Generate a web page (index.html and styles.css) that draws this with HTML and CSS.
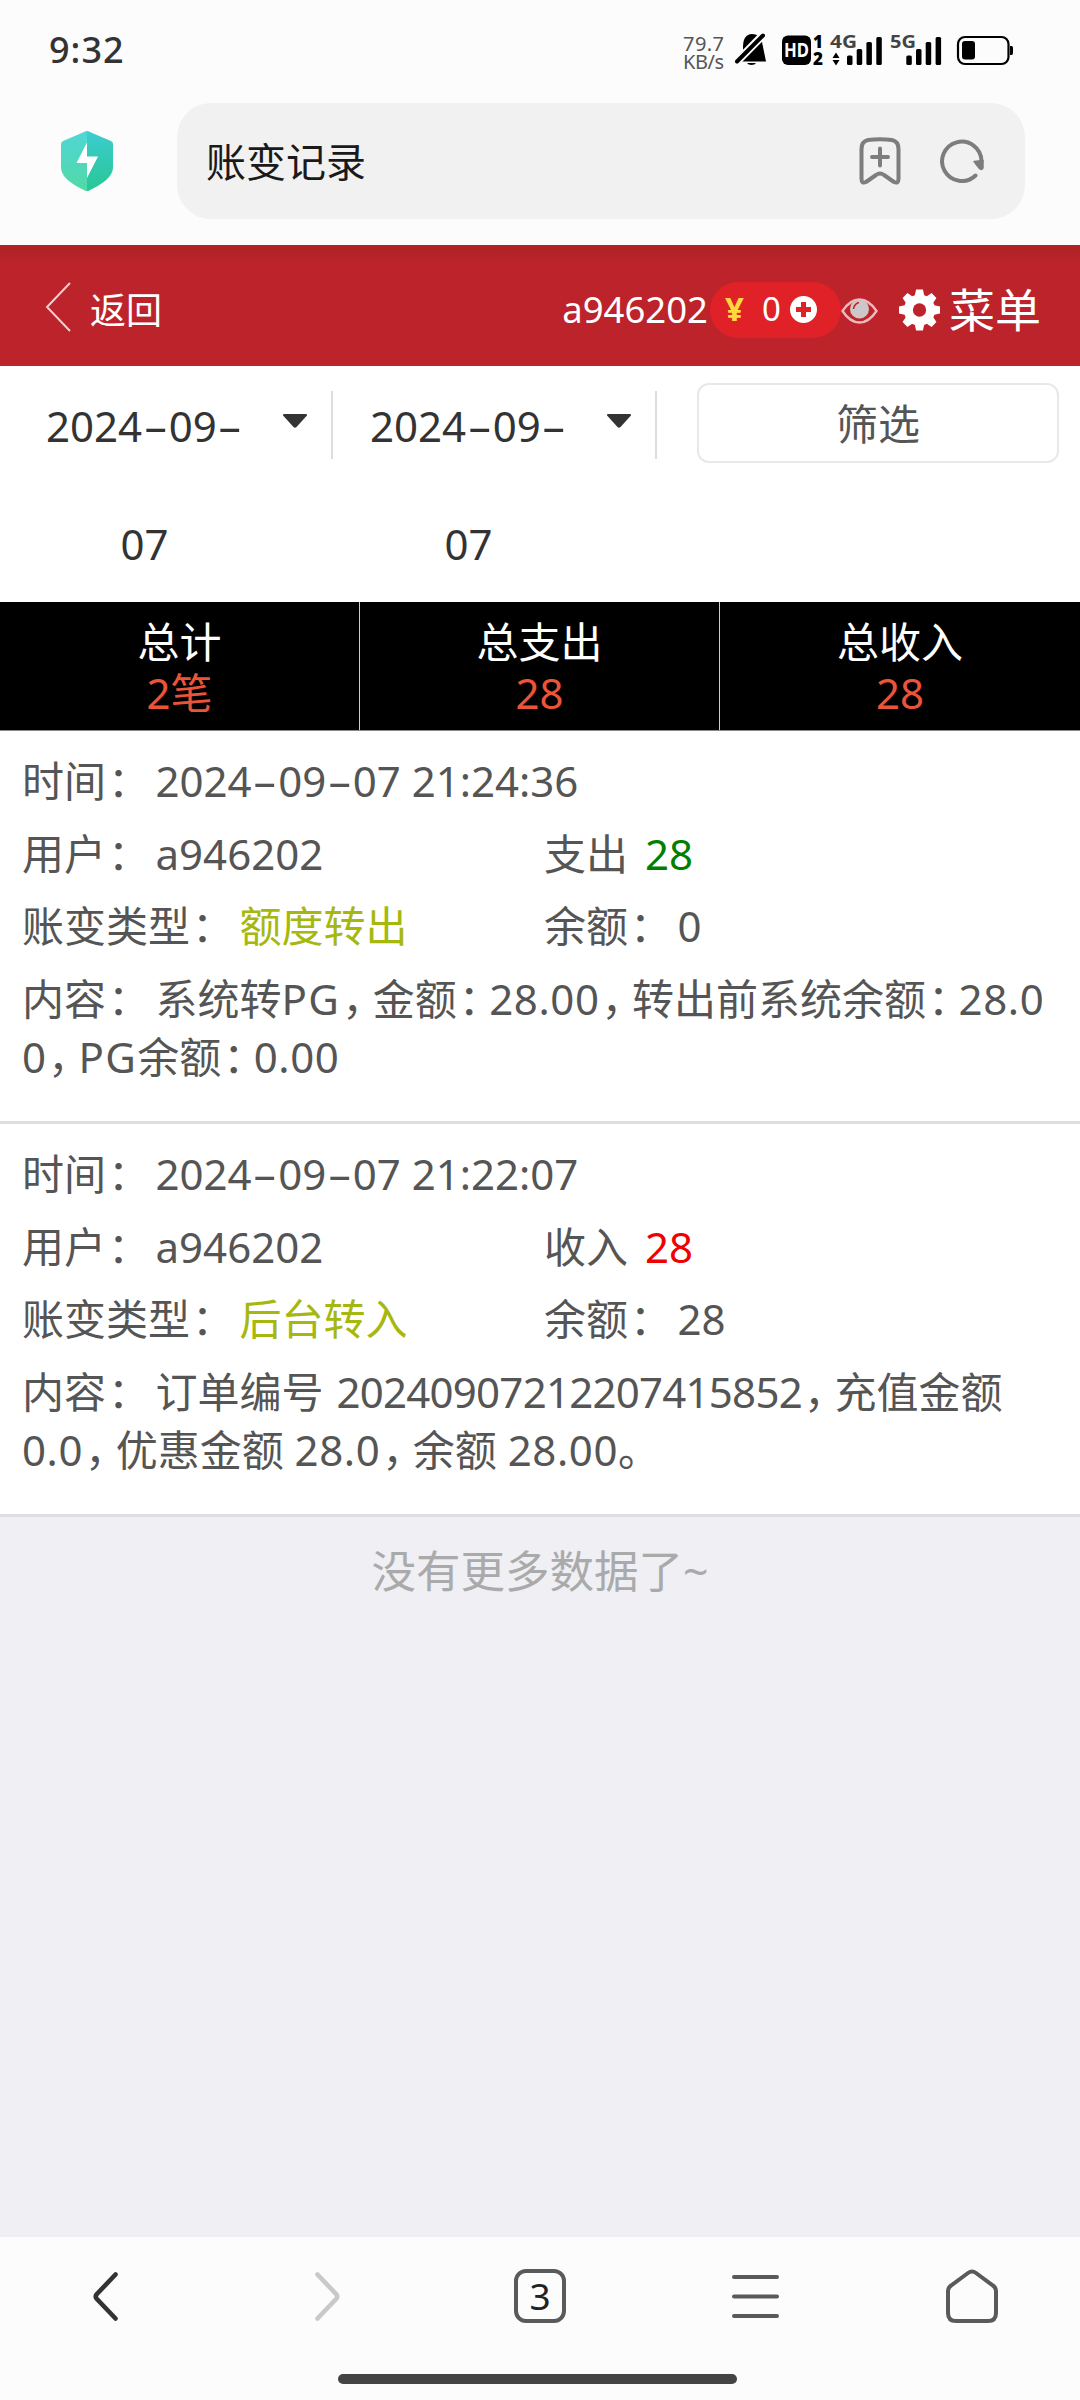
FILE: index.html
```html
<!DOCTYPE html>
<html lang="zh-CN">
<head>
<meta charset="utf-8">
<title>账变记录</title>
<link rel="stylesheet" href="styles.css">
</head>
<body>
<div class="status">
  <span class="clock">9:32</span>
  <svg class="status-icons" width="340" height="44" viewBox="680 30 340 44">
    <g class="net"><text x="683" y="50.500" textLength="41">79.7</text><text x="683" y="69" textLength="41">KB/s</text></g>
    <path d="M739 61.500V60L743 56V47C743 39 746 34 752 34C757 34 761 37 762 42L766 61.500ZM747 63H756Q755 65 751.500 65T747 63Z"/>
    <path d="M738 60.500L762 36" stroke="#fcfcfc" stroke-width="8"/>
    <path d="M737 61.500L763 35.500" stroke="#000" stroke-width="4" stroke-linecap="round"/>
    <rect x="782" y="35.500" width="29" height="29.500" rx="6"/>
    <text class="hd" x="784" y="57" textLength="25" lengthAdjust="spacingAndGlyphs">HD</text>
    <text class="sim" x="813" y="48">1</text><text class="sim" x="813" y="64.500">2</text>
    <text class="gen" x="830" y="47.500" textLength="27" lengthAdjust="spacingAndGlyphs">4G</text>
    <path d="M832.500 58L836 52.500L839.500 58ZM832.500 60L836 65.500L839.500 60Z"/>
    <g class="bars"><rect x="847" y="55.500" width="5.500" height="9.500" rx="1.500"/><rect x="856.700" y="49" width="5.500" height="16" rx="1.500"/><rect x="866.400" y="42" width="5.500" height="23" rx="1.500"/><rect x="876.300" y="37" width="5.500" height="28" rx="1.500"/></g>
    <text class="gen" x="890" y="47.500" textLength="26" lengthAdjust="spacingAndGlyphs">5G</text>
    <g class="bars"><rect x="906.300" y="55.500" width="5.500" height="9.500" rx="1.500"/><rect x="916" y="49" width="5.500" height="16" rx="1.500"/><rect x="925.700" y="42" width="5.500" height="23" rx="1.500"/><rect x="935.600" y="37" width="5.500" height="28" rx="1.500"/></g>
    <rect x="958" y="37" width="50.500" height="27" rx="7" fill="none" stroke="#000" stroke-width="2.200"/>
    <rect x="962" y="41" width="13" height="18.500" rx="3"/>
    <path d="M1010 46H1011.500Q1013 46 1013 48V53Q1013 55 1011.500 55H1010Z"/>
  </svg>
</div>

<div class="address">
  <svg class="shield" width="52" height="60" viewBox="0 0 52 60">
    <defs>
      <linearGradient id="sl" x1="0" y1="0" x2="0" y2="1"><stop offset="0" stop-color="#4fd6d6"/><stop offset="1" stop-color="#52d9a5"/></linearGradient>
      <linearGradient id="sr" x1="0" y1="0" x2="0" y2="1"><stop offset="0" stop-color="#3dccd0"/><stop offset="1" stop-color="#28c795"/></linearGradient>
    </defs>
    <path fill="url(#sl)" d="M26 0Q24 0 22 1.500L2 10Q0 11 0 13V36C0 47 13 54 22 58.500Q24 60 26 60Z"/>
    <path fill="url(#sr)" d="M26 0Q28 0 30 1.500L50 10Q52 11 52 13V36C52 47 39 54 30 58.500Q28 60 26 60Z"/>
    <path fill="#fff" d="M26 11.500V25.500H37L26 47V32H15.500Z"/>
  </svg>
  <div class="search">
    <span class="page-title">账变记录</span>
    <svg width="42" height="48" viewBox="0 0 42 48" fill="none" stroke="#7d7d7d" stroke-width="4" stroke-linecap="round" stroke-linejoin="round"><path d="M2.500 42V12Q2.500 4.500 9 3Q21 1.500 33 3Q39.500 4.500 39.500 12V42Q39.500 47 35 45L25 38Q21 35 17 38L7 45Q2.500 47 2.500 42ZM21 11.500V28.500M13 20H29"/></svg>
    <svg width="44" height="44" viewBox="0 0 44 44" fill="none" stroke="#7d7d7d" stroke-width="4" stroke-linecap="round"><path d="M35.500 36.500A19.700 19.700 0 1 1 41.500 22"/><path fill="#7d7d7d" stroke-width="1.500" stroke-linejoin="round" d="M34 22.500L43 21.500V29Q41.500 32 39 29Z"/></svg>
  </div>
</div>

<div class="topbar">
  <svg class="back" width="27" height="50" viewBox="0 0 27 50" fill="none" stroke="#f6cfd0" stroke-width="2"><path d="M25 1L2 25L25 49"/></svg>
  <span class="back-text">返回</span>
  <span class="user">a946202</span>
  <span class="pill"><b>¥</b><span class="amount">0</span>
    <svg width="27" height="27" viewBox="0 0 27 27"><circle cx="13.500" cy="13.500" r="13.500" fill="#fff"/><path stroke="#e02127" stroke-width="5" d="M13.500 6V21M6 13.500H21"/></svg>
  </span>
  <svg class="eye" width="37" height="26" viewBox="0 0 37 26"><path fill="none" stroke="#edb9bb" stroke-width="2.400" d="M1.500 13Q9 1.500 18.500 1.500T35.500 13Q28 24.500 18.500 24.500T1.500 13Z"/><circle cx="18.500" cy="11" r="9.500" fill="#ccc8c9"/><path fill="none" stroke="#bd232a" stroke-width="1.600" d="M12.500 11Q13 6 18 4.500"/></svg>
  <svg class="gear" width="41" height="42" viewBox="-21 -21 42 42"><g fill="#fff"><circle r="16"/><path id="tooth" d="M-5-14L-3.500-21H3.500L5-14ZM-5 14L-3.500 21H3.500L5 14Z"/><use href="#tooth" transform="rotate(45)"/><use href="#tooth" transform="rotate(90)"/><use href="#tooth" transform="rotate(135)"/></g><circle r="6.800" fill="#bd232a"/></svg>
  <span class="menu">菜单</span>
</div>

<div class="filters">
  <div class="date"><span class="value">2024<i>-</i>09<i>-</i><br>07</span><svg class="caret" width="24" height="14" viewBox="0 0 24 14"><path fill="#333" d="M1.500 0H22.500Q25 0 23.500 2L13.500 13Q12 14.500 10.500 13L.500 2Q-1 0 1.500 0Z"/></svg><span class="sep"></span></div>
  <div class="date"><span class="value">2024<i>-</i>09<i>-</i><br>07</span><svg class="caret" width="24" height="14" viewBox="0 0 24 14"><path fill="#333" d="M1.500 0H22.500Q25 0 23.500 2L13.500 13Q12 14.500 10.500 13L.500 2Q-1 0 1.500 0Z"/></svg><span class="sep"></span></div>
  <button class="filter-btn">筛选</button>
</div>

<div class="totals">
  <div><span>总计</span><em>2笔</em></div>
  <div><span>总支出</span><em>28</em></div>
  <div><span>总收入</span><em>28</em></div>
</div>

<div class="record">
  <div class="row"><span class="label">时间<u>：</u></span><span>2024<i>-</i>09<i>-</i>07 21:24:36</span></div>
  <div class="row"><div class="cell"><span class="label">用户<u>：</u></span><span>a946202</span></div><div class="cell"><span class="label">支出</span><span class="out">28</span></div></div>
  <div class="row"><div class="cell"><span class="label">账变类型<u>：</u></span><span class="kind">额度转出</span></div><div class="cell"><span class="label">余额<u>：</u></span><span>0</span></div></div>
  <div class="note"><span class="label">内容<u>：</u></span>系统转<span class="pg">PG</span><u>，</u>金额<u>：</u><span class="num">28.00</span><u>，</u>转出前系统余额<u>：</u><span class="num">28.0</span><br>0<u>，</u><span class="pg">PG</span>余额<u>：</u><span class="num">0.00</span></div>
</div>
<div class="record">
  <div class="row"><span class="label">时间<u>：</u></span><span>2024<i>-</i>09<i>-</i>07 21:22:07</span></div>
  <div class="row"><div class="cell"><span class="label">用户<u>：</u></span><span>a946202</span></div><div class="cell"><span class="label">收入</span><span class="in">28</span></div></div>
  <div class="row"><div class="cell"><span class="label">账变类型<u>：</u></span><span class="kind">后台转入</span></div><div class="cell"><span class="label">余额<u>：</u></span><span>28</span></div></div>
  <div class="note"><span class="label">内容<u>：</u></span>订单编号 <span class="order">20240907212207415852</span><u>，</u>充值金额<br><span class="num">0.0</span><u>，</u>优惠金额 <span class="num">28.0</span><u>，</u>余额 <span class="num">28.00</span>。</div>
</div>
<div class="end">没有更多数据了~</div>

<div class="bottom">
  <div class="nav">
    <svg width="54" height="54" viewBox="0 0 54 54" fill="none" stroke="#333" stroke-width="4.600" stroke-linecap="round"><path d="M34.500 5.500L15.500 25.500Q14 27.500 15.500 29.500L34.500 49.500"/></svg>
    <svg width="54" height="54" viewBox="0 0 54 54" fill="none" stroke="#c9c9c9" stroke-width="4.600" stroke-linecap="round"><path d="M20.500 5.500L39.500 25.500Q41 27.500 39.500 29.500L20.500 49.500"/></svg>
    <span class="tabs">3</span>
    <svg width="54" height="54" viewBox="0 0 54 54" fill="none" stroke="#5a5a5a" stroke-width="4" stroke-linecap="round"><path d="M5 8H48M5 27.500H48M5 47H48"/></svg>
    <svg width="54" height="54" viewBox="0 0 54 54" fill="none" stroke="#5a5a5a" stroke-width="4"><path d="M3 22Q3 18.500 6 16.500L23 4Q27 1 31 4L48 16.500Q51 18.500 51 22V44Q51 52 43 52H11Q3 52 3 44Z"/></svg>
  </div>
  <div class="handle"></div>
</div>
</body>
</html>
```
FILE: styles.css
```css
* { box-sizing: border-box; }
body {
  margin: 0;
  width: 1080px;
  height: 2400px;
  display: flex;
  flex-direction: column;
  overflow: hidden;
  background: #efeff4;
  color: #555;
  font: 42px/58.8px "Noto Sans", "Noto Sans CJK SC", sans-serif;
}
svg { display: block; flex: none; }
i {
  display: inline-block;
  margin: 0 6.5px;
  font-style: normal;
  transform: scaleX(1.85);
}
u { padding-left: 2px; text-decoration: none; letter-spacing: -11.5px; }

.status {
  height: 90px;
  padding: 30px 60px 16px 49px;
  display: flex;
  justify-content: space-between;
  background: #fcfcfc;
}
.clock { font-size: 36px; line-height: 40px; font-weight: 500; color: #333; letter-spacing: 1px; }
.net { font-size: 20px; fill: #555; }
.hd { font-size: 19px; font-weight: 700; fill: #fff; }
.sim { font-size: 17px; font-weight: 900; }
.gen { font-size: 18px; font-weight: 700; fill: #444; }

.address {
  height: 155px;
  padding: 13px 55px 26px 61px;
  display: flex;
  align-items: center;
  gap: 64px;
  background: #fcfcfc;
}
.search {
  flex: 1;
  height: 116px;
  padding: 0 41px 0 29px;
  display: flex;
  align-items: center;
  gap: 39px;
  border-radius: 34px;
  background: #f1f1f1;
}
.page-title { flex: 1; padding-top: 2px; font-size: 40px; color: #1a1a1a; }

.topbar {
  height: 121px;
  padding: 8px 39px 0 45px;
  display: flex;
  align-items: center;
  color: #fff;
  background: linear-gradient(#ad2226, #bd232a 19px);
}
.back { margin-top: -6px; }
.back-text { margin-left: 18px; padding-top: 3px; flex: 1; font-size: 36px; }
.user { font-size: 36.500px; }
.pill {
  width: 131px;
  height: 56px;
  margin: 0 0 0 2px;
  padding-left: 15px;
  display: flex;
  align-items: center;
  border-radius: 28px;
  background: #e02127;
  font-size: 33px;
}
.pill b { width: 37px; color: #ffd83d; }
.amount { width: 28px; }
.eye { margin-top: 2px; }
.gear { margin-left: 21px; }
.menu { margin-left: 9px; font-size: 46px; }

.filters {
  height: 236px;
  display: flex;
  color: #333;
}
.filters, .record { background: #fff; }
.date { display: flex; width: 333px; padding-left: 46px; }
.date + .date { width: 324px; padding-left: 37px; }
.value { width: 197px; padding-top: 1px; line-height: 118px; text-align: center; white-space: nowrap; }
.caret { margin: 48px 0 0 40px; }
.sep { width: 2px; height: 68px; margin: 25px 0 0 auto; background: #ddd; }
.filter-btn {
  width: 362px;
  height: 80px;
  margin: 17px 0 0 40px;
  padding: 3px 0 0;
  border: 2px solid #e8e8e8;
  border-radius: 12px;
  background: #fff;
  color: #555;
  font: inherit;
}

.totals {
  height: 129px;
  display: grid;
  grid-template-columns: repeat(3, 1fr);
  background: #000;
  border-bottom: 1px solid #888;
  color: #fff;
}
.totals div {
  padding-top: 14px;
  display: flex;
  flex-direction: column;
  align-items: center;
  line-height: 51px;
}
.totals div:not(:last-child) { border-right: 1px solid #ccc; }
.totals em { font-style: normal; color: #ec5439; }

.record {
  height: 393px;
  padding: 14px 0 0 22px;
  border-bottom: 3px solid #dedee0;
}
.row { display: flex; padding: 7px 0; height: 72.500px; }
.cell { width: 523px; }
.cell + .cell { margin-left: -1px; }
.label { margin-right: 17px; }
.out { color: #008000; }
.in { color: #f00000; }
.kind { color: #a6b80e; }
.note { padding-top: 7px; white-space: nowrap; }
.pg { letter-spacing: 1.3px; }
.num { letter-spacing: .6px; }
.order { margin-left: 2px; letter-spacing: -.75px; }

.end { flex: 1; padding-top: 23px; text-align: center; font-size: 44.500px; line-height: 62px; color: #aaa; }

.bottom { height: 163px; padding-top: 32px; background: #fcfcfc; }
.nav { display: grid; grid-template-columns: repeat(5, 1fr); justify-items: center; }
.tabs {
  width: 52px;
  height: 54px;
  border: 4px solid #5a5a5a;
  border-radius: 12px;
  text-align: center;
  font-size: 37px;
  line-height: 46px;
  color: #222;
}
.handle { width: 399px; height: 10px; margin: 51px 0 0 338px; border-radius: 5px; background: #444; }
```
